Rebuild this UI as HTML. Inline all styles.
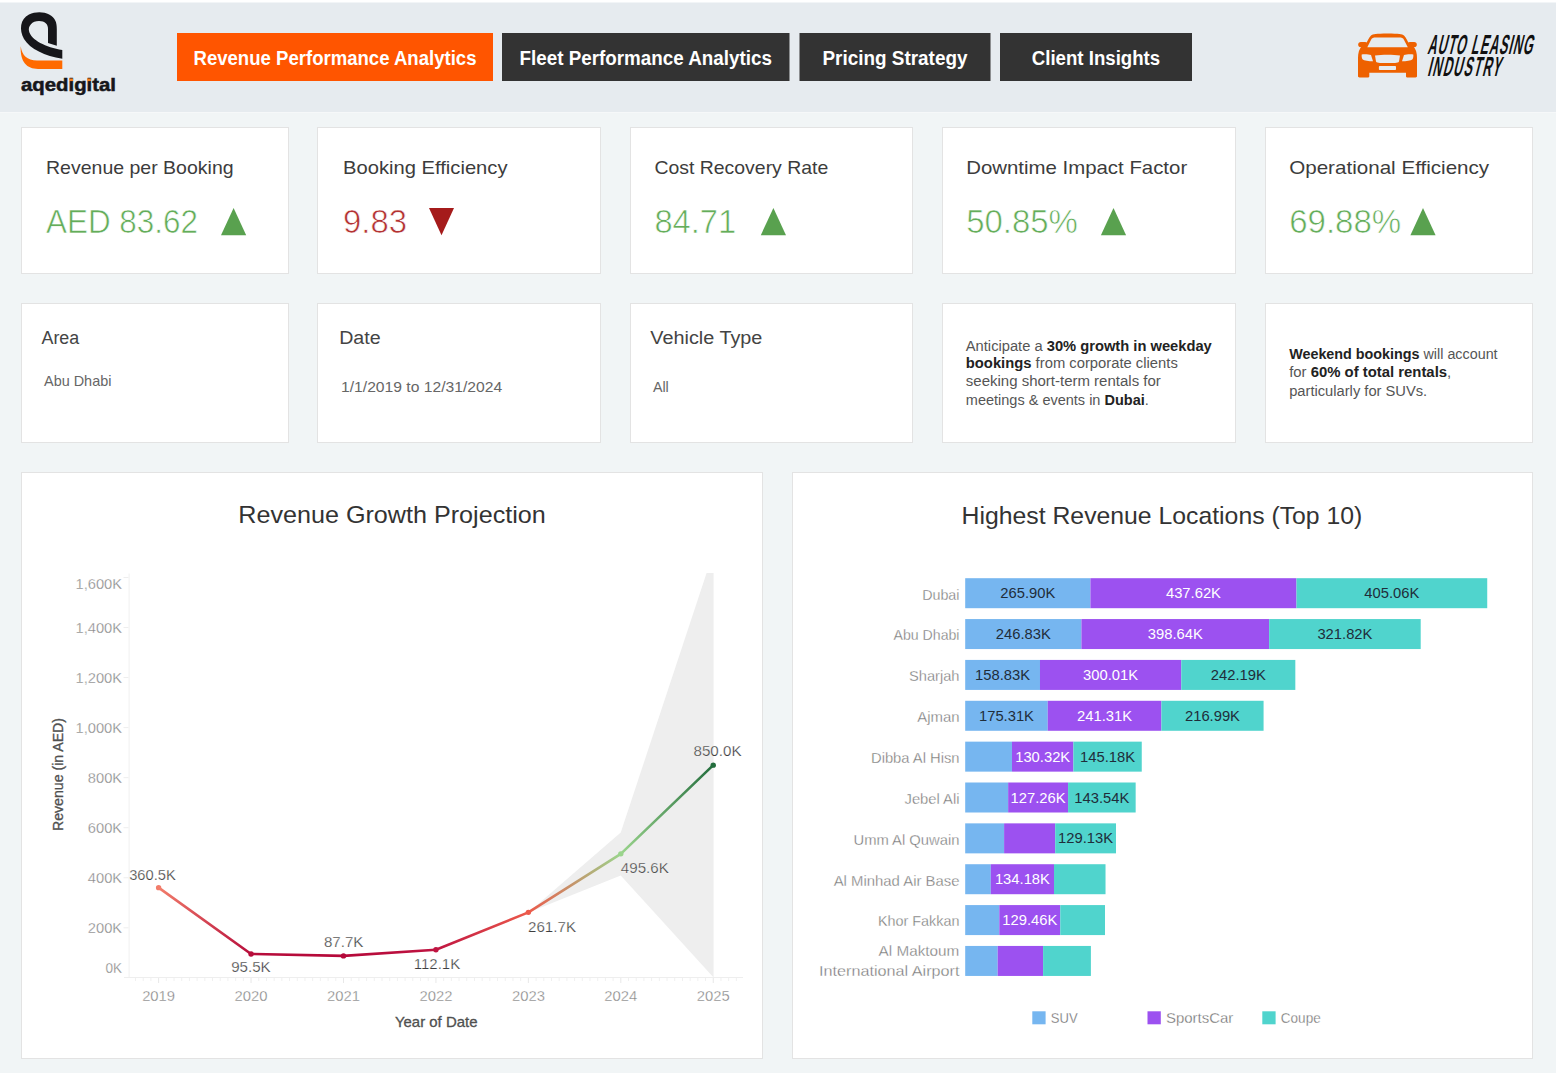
<!DOCTYPE html>
<html><head><meta charset="utf-8"><title>Revenue Performance Analytics</title>
<style>
html,body{margin:0;padding:0;background:#ffffff;overflow:hidden;}
svg{display:block;font-family:"Liberation Sans", sans-serif;}
</style></head><body>
<svg width="1556" height="1080" viewBox="0 0 1556 1080">

<rect x="0" y="0" width="1556" height="1080" fill="#ffffff"/>
<rect x="0" y="2.5" width="1556" height="109.5" fill="#e6ebef"/>
<rect x="0" y="112" width="1556" height="1" fill="#f6f8f9"/>
<rect x="0" y="113" width="1556" height="960" fill="#f1f5f6"/>
<path fill="#16161a" d="M62.3,58.7 C45,56 30,49 24,39 C19,30 20,19 29,14.5 C38,10 52,12 55.5,21 C56.5,23 56.8,26 56.8,29 L56.8,45.7 L48,43 L48,29 C48,24 45,21 39,21 C32,21 28,26 29,31 C31,40 46,47.5 62.3,49.9 Z"/>
<path fill="#ff6a00" d="M20.7,46.2 C22,55 27,60.5 37,60.5 L62.3,60.5 L62.3,68.9 L38,68.9 C27,68.9 20,62 20.7,46.2 Z"/>
<text x="21" y="91.2" font-size="18" font-weight="bold" fill="#16161a" stroke="#16161a" stroke-width="0.5" textLength="95" lengthAdjust="spacingAndGlyphs">aqedigital</text>
<rect x="69.4" y="78.5" width="3.6" height="2.6" fill="#f7801f"/><rect x="87.3" y="78.5" width="3.6" height="2.6" fill="#f7801f"/>
<rect x="177" y="33" width="316" height="48" fill="#ff5500"/>
<text x="335.0" y="65" font-size="19.6" font-weight="bold" fill="#ffffff" text-anchor="middle" textLength="283" lengthAdjust="spacingAndGlyphs">Revenue Performance Analytics</text>
<rect x="502" y="33" width="287.5" height="48" fill="#333333"/>
<text x="645.75" y="65" font-size="19.6" font-weight="bold" fill="#ffffff" text-anchor="middle" textLength="252.3" lengthAdjust="spacingAndGlyphs">Fleet Performance Analytics</text>
<rect x="799.5" y="33" width="191" height="48" fill="#333333"/>
<text x="895.0" y="65" font-size="19.6" font-weight="bold" fill="#ffffff" text-anchor="middle" textLength="145" lengthAdjust="spacingAndGlyphs">Pricing Strategy</text>
<rect x="1000" y="33" width="192" height="48" fill="#333333"/>
<text x="1096.0" y="65" font-size="19.6" font-weight="bold" fill="#ffffff" text-anchor="middle" textLength="128.4" lengthAdjust="spacingAndGlyphs">Client Insights</text>
<g fill="#ee6100">
<path d="M1364.5,47.5 C1366.5,43 1368.5,38 1371,35.5 C1373,34 1376,33.6 1387.5,33.5 C1399,33.6 1402,34 1404,35.5 C1406.5,38 1408.5,43 1410.5,47.5 Z"/>
<rect x="1358.2" y="42" width="9.5" height="5.2" rx="2.6"/>
<rect x="1407.3" y="42" width="9.5" height="5.2" rx="2.6"/>
<path d="M1362,46 L1413,46 C1416,49 1417,53 1417,58 L1417,76 C1417,77 1416.5,77.4 1415.5,77.4 L1407,77.4 C1406.3,77.4 1406,77 1406,76 L1406,72.8 L1369.3,72.8 L1369.3,76 C1369.3,77 1369,77.4 1368.3,77.4 L1359.5,77.4 C1358.5,77.4 1358,77 1358,76 L1358,58 C1358,53 1359,49 1362,46 Z"/>
</g>
<g fill="#e6ebef">
<path d="M1367.3,47.2 L1371.2,39.6 C1372,38.1 1373.2,37.6 1376,37.6 L1399,37.6 C1401.8,37.6 1403,38.1 1403.8,39.6 L1407.8,47.2 Z"/>
<path d="M1361.7,54.6 C1363.5,54 1369,54.3 1371,55 L1373,61.2 C1369,61.2 1364,60.8 1362.5,59.2 C1361.7,58.3 1361.5,56 1361.7,54.6 Z"/>
<path d="M1413.3,54.6 C1411.5,54 1406,54.3 1404,55 L1402,61.2 C1406,61.2 1411,60.8 1412.5,59.2 C1413.3,58.3 1413.5,56 1413.3,54.6 Z"/>
<path d="M1375,55.5 C1382,54.6 1393,54.6 1400,55.5 L1399,61.5 C1398.5,62.5 1397,62.9 1395,62.9 L1380,62.9 C1378,62.9 1376.5,62.5 1376,61.5 Z"/>
<rect x="1378.9" y="66.1" width="17.1" height="3.9" rx="0.8"/>
</g>
<g transform="translate(1427,53.5) skewX(-14) scale(0.45,1)"><text x="0" y="0" font-size="27.5" font-weight="bold" fill="#111111" textLength="233" lengthAdjust="spacing">AUTO LEASING</text></g>
<g transform="translate(1427,76.4) skewX(-14) scale(0.45,1)"><text x="0" y="0" font-size="27.5" font-weight="bold" fill="#111111" textLength="161.8" lengthAdjust="spacing">INDUSTRY</text></g>
<rect x="21.5" y="127.5" width="267" height="146" fill="#ffffff" stroke="#e3e3e3" stroke-width="1"/>
<rect x="21.5" y="303.5" width="267" height="139" fill="#ffffff" stroke="#e3e3e3" stroke-width="1"/>
<rect x="317.5" y="127.5" width="283" height="146" fill="#ffffff" stroke="#e3e3e3" stroke-width="1"/>
<rect x="317.5" y="303.5" width="283" height="139" fill="#ffffff" stroke="#e3e3e3" stroke-width="1"/>
<rect x="630.5" y="127.5" width="282" height="146" fill="#ffffff" stroke="#e3e3e3" stroke-width="1"/>
<rect x="630.5" y="303.5" width="282" height="139" fill="#ffffff" stroke="#e3e3e3" stroke-width="1"/>
<rect x="942.5" y="127.5" width="293" height="146" fill="#ffffff" stroke="#e3e3e3" stroke-width="1"/>
<rect x="942.5" y="303.5" width="293" height="139" fill="#ffffff" stroke="#e3e3e3" stroke-width="1"/>
<rect x="1265.5" y="127.5" width="267" height="146" fill="#ffffff" stroke="#e3e3e3" stroke-width="1"/>
<rect x="1265.5" y="303.5" width="267" height="139" fill="#ffffff" stroke="#e3e3e3" stroke-width="1"/>
<rect x="21.5" y="472.5" width="741" height="586" fill="#ffffff" stroke="#e3e3e3" stroke-width="1"/>
<rect x="792.5" y="472.5" width="740" height="586" fill="#ffffff" stroke="#e3e3e3" stroke-width="1"/>
<text x="46" y="174.2" font-size="19" fill="#3c3c3c" textLength="187.6" lengthAdjust="spacingAndGlyphs">Revenue per Booking</text>
<text x="46" y="233.2" font-size="33" fill="#64ad5a" stroke="#ffffff" stroke-width="0.65" textLength="152" lengthAdjust="spacingAndGlyphs">AED 83.62</text>
<path d="M221,235.2 L233.6,207.9 L246.2,235.2 Z" fill="#59a14f"/>
<text x="343" y="174.2" font-size="19" fill="#3c3c3c" textLength="164.5" lengthAdjust="spacingAndGlyphs">Booking Efficiency</text>
<text x="343" y="233.2" font-size="33" fill="#b33232" stroke="#ffffff" stroke-width="0.65" textLength="64" lengthAdjust="spacingAndGlyphs">9.83</text>
<path d="M429,207.9 L454,207.9 L441.5,235.2 Z" fill="#a51b1b"/>
<text x="654.4" y="174.2" font-size="19" fill="#3c3c3c" textLength="173.9" lengthAdjust="spacingAndGlyphs">Cost Recovery Rate</text>
<text x="654.4" y="233.2" font-size="33" fill="#64ad5a" stroke="#ffffff" stroke-width="0.65" textLength="81.8" lengthAdjust="spacingAndGlyphs">84.71</text>
<path d="M760.8,235.2 L773.4,207.9 L786.0,235.2 Z" fill="#59a14f"/>
<text x="966.2" y="174.2" font-size="19" fill="#3c3c3c" textLength="221" lengthAdjust="spacingAndGlyphs">Downtime Impact Factor</text>
<text x="966.2" y="233.2" font-size="33" fill="#64ad5a" stroke="#ffffff" stroke-width="0.65" textLength="111.7" lengthAdjust="spacingAndGlyphs">50.85%</text>
<path d="M1100.9,235.2 L1113.5,207.9 L1126.1000000000001,235.2 Z" fill="#59a14f"/>
<text x="1289.2" y="174.2" font-size="19" fill="#3c3c3c" textLength="200" lengthAdjust="spacingAndGlyphs">Operational Efficiency</text>
<text x="1289.2" y="233.2" font-size="33" fill="#64ad5a" stroke="#ffffff" stroke-width="0.65" textLength="112" lengthAdjust="spacingAndGlyphs">69.88%</text>
<path d="M1410.4,235.2 L1423.0,207.9 L1435.6000000000001,235.2 Z" fill="#59a14f"/>
<text x="41.5" y="343.5" font-size="18" fill="#444444" textLength="37.7" lengthAdjust="spacingAndGlyphs">Area</text>
<text x="44" y="385.9" font-size="14.5" fill="#666666" textLength="67.4" lengthAdjust="spacingAndGlyphs">Abu Dhabi</text>
<text x="339.2" y="343.5" font-size="18" fill="#444444" textLength="41.5" lengthAdjust="spacingAndGlyphs">Date</text>
<text x="341" y="392.3" font-size="14.5" fill="#666666" textLength="161.2" lengthAdjust="spacingAndGlyphs">1/1/2019 to 12/31/2024</text>
<text x="650.3" y="343.5" font-size="18" fill="#444444" textLength="112.1" lengthAdjust="spacingAndGlyphs">Vehicle Type</text>
<text x="652.9" y="392" font-size="14.5" fill="#666666" textLength="15.9" lengthAdjust="spacingAndGlyphs">All</text>
<text x="965.8" y="351.2" font-size="14" textLength="246" lengthAdjust="spacingAndGlyphs"><tspan fill="#555555">Anticipate a </tspan><tspan font-weight="bold" fill="#222222">30% growth in weekday</tspan></text>
<text x="965.8" y="368.2" font-size="14" textLength="212" lengthAdjust="spacingAndGlyphs"><tspan font-weight="bold" fill="#222222">bookings</tspan><tspan fill="#555555"> from corporate clients</tspan></text>
<text x="965.8" y="386.4" font-size="14" textLength="195" lengthAdjust="spacingAndGlyphs"><tspan fill="#555555">seeking short-term rentals for</tspan></text>
<text x="965.8" y="404.6" font-size="14" textLength="183" lengthAdjust="spacingAndGlyphs"><tspan fill="#555555">meetings &amp; events in </tspan><tspan font-weight="bold" fill="#222222">Dubai</tspan><tspan fill="#555555">.</tspan></text>
<text x="1289.2" y="359.4" font-size="14" textLength="208.4" lengthAdjust="spacingAndGlyphs"><tspan font-weight="bold" fill="#222222">Weekend bookings</tspan><tspan fill="#555555"> will account</tspan></text>
<text x="1289.2" y="377.1" font-size="14" textLength="162" lengthAdjust="spacingAndGlyphs"><tspan fill="#555555">for </tspan><tspan font-weight="bold" fill="#222222">60% of total rentals</tspan><tspan fill="#555555">,</tspan></text>
<text x="1289.2" y="395.6" font-size="14" textLength="138" lengthAdjust="spacingAndGlyphs"><tspan fill="#555555">particularly for SUVs.</tspan></text>
<text x="238.3" y="523.4" font-size="24.5" fill="#333333" textLength="307.5" lengthAdjust="spacingAndGlyphs">Revenue Growth Projection</text>
<rect x="128.6" y="573.5" width="1" height="404.5" fill="#f0f0f0"/>
<rect x="124" y="977" width="619" height="1" fill="#eeeeee"/>
<text x="122.1" y="973.3" font-size="14.3" fill="#828282" stroke="#ffffff" stroke-width="0.3" text-anchor="end" textLength="16.6" lengthAdjust="spacingAndGlyphs">0K</text>
<rect x="123.5" y="927.30" width="5" height="1" fill="#eeeeee"/>
<text x="122.1" y="932.8" font-size="14.3" fill="#828282" stroke="#ffffff" stroke-width="0.3" text-anchor="end" textLength="34.3" lengthAdjust="spacingAndGlyphs">200K</text>
<rect x="123.5" y="877.25" width="5" height="1" fill="#eeeeee"/>
<text x="122.1" y="882.8" font-size="14.3" fill="#828282" stroke="#ffffff" stroke-width="0.3" text-anchor="end" textLength="34.3" lengthAdjust="spacingAndGlyphs">400K</text>
<rect x="123.5" y="827.20" width="5" height="1" fill="#eeeeee"/>
<text x="122.1" y="832.7" font-size="14.3" fill="#828282" stroke="#ffffff" stroke-width="0.3" text-anchor="end" textLength="34.3" lengthAdjust="spacingAndGlyphs">600K</text>
<rect x="123.5" y="777.15" width="5" height="1" fill="#eeeeee"/>
<text x="122.1" y="782.7" font-size="14.3" fill="#828282" stroke="#ffffff" stroke-width="0.3" text-anchor="end" textLength="34.3" lengthAdjust="spacingAndGlyphs">800K</text>
<rect x="123.5" y="727.10" width="5" height="1" fill="#eeeeee"/>
<text x="122.1" y="732.6" font-size="14.3" fill="#828282" stroke="#ffffff" stroke-width="0.3" text-anchor="end" textLength="46.6" lengthAdjust="spacingAndGlyphs">1,000K</text>
<rect x="123.5" y="677.05" width="5" height="1" fill="#eeeeee"/>
<text x="122.1" y="682.6" font-size="14.3" fill="#828282" stroke="#ffffff" stroke-width="0.3" text-anchor="end" textLength="46.6" lengthAdjust="spacingAndGlyphs">1,200K</text>
<rect x="123.5" y="627.00" width="5" height="1" fill="#eeeeee"/>
<text x="122.1" y="632.5" font-size="14.3" fill="#828282" stroke="#ffffff" stroke-width="0.3" text-anchor="end" textLength="46.6" lengthAdjust="spacingAndGlyphs">1,400K</text>
<rect x="123.5" y="576.95" width="5" height="1" fill="#eeeeee"/>
<text x="122.1" y="589.4" font-size="14.3" fill="#828282" stroke="#ffffff" stroke-width="0.3" text-anchor="end" textLength="46.6" lengthAdjust="spacingAndGlyphs">1,600K</text>
<rect x="134.99" y="978" width="1" height="3" fill="#f0f0f0"/>
<rect x="142.69" y="978" width="1" height="3" fill="#f0f0f0"/>
<rect x="150.40" y="978" width="1" height="3" fill="#f0f0f0"/>
<rect x="158.10" y="978" width="1" height="5" fill="#e8e8e8"/>
<rect x="165.80" y="978" width="1" height="3" fill="#f0f0f0"/>
<rect x="173.51" y="978" width="1" height="3" fill="#f0f0f0"/>
<rect x="181.21" y="978" width="1" height="3" fill="#f0f0f0"/>
<rect x="188.91" y="978" width="1" height="3" fill="#f0f0f0"/>
<rect x="196.62" y="978" width="1" height="3" fill="#f0f0f0"/>
<rect x="204.32" y="978" width="1" height="3" fill="#f0f0f0"/>
<rect x="212.02" y="978" width="1" height="3" fill="#f0f0f0"/>
<rect x="219.73" y="978" width="1" height="3" fill="#f0f0f0"/>
<rect x="227.43" y="978" width="1" height="3" fill="#f0f0f0"/>
<rect x="235.13" y="978" width="1" height="3" fill="#f0f0f0"/>
<rect x="242.84" y="978" width="1" height="3" fill="#f0f0f0"/>
<rect x="250.54" y="978" width="1" height="5" fill="#e8e8e8"/>
<rect x="258.25" y="978" width="1" height="3" fill="#f0f0f0"/>
<rect x="265.95" y="978" width="1" height="3" fill="#f0f0f0"/>
<rect x="273.65" y="978" width="1" height="3" fill="#f0f0f0"/>
<rect x="281.36" y="978" width="1" height="3" fill="#f0f0f0"/>
<rect x="289.06" y="978" width="1" height="3" fill="#f0f0f0"/>
<rect x="296.76" y="978" width="1" height="3" fill="#f0f0f0"/>
<rect x="304.47" y="978" width="1" height="3" fill="#f0f0f0"/>
<rect x="312.17" y="978" width="1" height="3" fill="#f0f0f0"/>
<rect x="319.87" y="978" width="1" height="3" fill="#f0f0f0"/>
<rect x="327.58" y="978" width="1" height="3" fill="#f0f0f0"/>
<rect x="335.28" y="978" width="1" height="3" fill="#f0f0f0"/>
<rect x="342.98" y="978" width="1" height="5" fill="#e8e8e8"/>
<rect x="350.69" y="978" width="1" height="3" fill="#f0f0f0"/>
<rect x="358.39" y="978" width="1" height="3" fill="#f0f0f0"/>
<rect x="366.09" y="978" width="1" height="3" fill="#f0f0f0"/>
<rect x="373.80" y="978" width="1" height="3" fill="#f0f0f0"/>
<rect x="381.50" y="978" width="1" height="3" fill="#f0f0f0"/>
<rect x="389.20" y="978" width="1" height="3" fill="#f0f0f0"/>
<rect x="396.91" y="978" width="1" height="3" fill="#f0f0f0"/>
<rect x="404.61" y="978" width="1" height="3" fill="#f0f0f0"/>
<rect x="412.31" y="978" width="1" height="3" fill="#f0f0f0"/>
<rect x="420.02" y="978" width="1" height="3" fill="#f0f0f0"/>
<rect x="427.72" y="978" width="1" height="3" fill="#f0f0f0"/>
<rect x="435.42" y="978" width="1" height="5" fill="#e8e8e8"/>
<rect x="443.13" y="978" width="1" height="3" fill="#f0f0f0"/>
<rect x="450.83" y="978" width="1" height="3" fill="#f0f0f0"/>
<rect x="458.54" y="978" width="1" height="3" fill="#f0f0f0"/>
<rect x="466.24" y="978" width="1" height="3" fill="#f0f0f0"/>
<rect x="473.94" y="978" width="1" height="3" fill="#f0f0f0"/>
<rect x="481.65" y="978" width="1" height="3" fill="#f0f0f0"/>
<rect x="489.35" y="978" width="1" height="3" fill="#f0f0f0"/>
<rect x="497.05" y="978" width="1" height="3" fill="#f0f0f0"/>
<rect x="504.76" y="978" width="1" height="3" fill="#f0f0f0"/>
<rect x="512.46" y="978" width="1" height="3" fill="#f0f0f0"/>
<rect x="520.16" y="978" width="1" height="3" fill="#f0f0f0"/>
<rect x="527.87" y="978" width="1" height="5" fill="#e8e8e8"/>
<rect x="535.57" y="978" width="1" height="3" fill="#f0f0f0"/>
<rect x="543.27" y="978" width="1" height="3" fill="#f0f0f0"/>
<rect x="550.98" y="978" width="1" height="3" fill="#f0f0f0"/>
<rect x="558.68" y="978" width="1" height="3" fill="#f0f0f0"/>
<rect x="566.38" y="978" width="1" height="3" fill="#f0f0f0"/>
<rect x="574.09" y="978" width="1" height="3" fill="#f0f0f0"/>
<rect x="581.79" y="978" width="1" height="3" fill="#f0f0f0"/>
<rect x="589.49" y="978" width="1" height="3" fill="#f0f0f0"/>
<rect x="597.20" y="978" width="1" height="3" fill="#f0f0f0"/>
<rect x="604.90" y="978" width="1" height="3" fill="#f0f0f0"/>
<rect x="612.60" y="978" width="1" height="3" fill="#f0f0f0"/>
<rect x="620.31" y="978" width="1" height="5" fill="#e8e8e8"/>
<rect x="628.01" y="978" width="1" height="3" fill="#f0f0f0"/>
<rect x="635.72" y="978" width="1" height="3" fill="#f0f0f0"/>
<rect x="643.42" y="978" width="1" height="3" fill="#f0f0f0"/>
<rect x="651.12" y="978" width="1" height="3" fill="#f0f0f0"/>
<rect x="658.83" y="978" width="1" height="3" fill="#f0f0f0"/>
<rect x="666.53" y="978" width="1" height="3" fill="#f0f0f0"/>
<rect x="674.23" y="978" width="1" height="3" fill="#f0f0f0"/>
<rect x="681.94" y="978" width="1" height="3" fill="#f0f0f0"/>
<rect x="689.64" y="978" width="1" height="3" fill="#f0f0f0"/>
<rect x="697.34" y="978" width="1" height="3" fill="#f0f0f0"/>
<rect x="705.05" y="978" width="1" height="3" fill="#f0f0f0"/>
<rect x="712.75" y="978" width="1" height="5" fill="#e8e8e8"/>
<rect x="720.45" y="978" width="1" height="3" fill="#f0f0f0"/>
<rect x="728.16" y="978" width="1" height="3" fill="#f0f0f0"/>
<rect x="735.86" y="978" width="1" height="3" fill="#f0f0f0"/>
<text x="158.6" y="1001.3" font-size="14.8" fill="#828282" stroke="#ffffff" stroke-width="0.3" text-anchor="middle">2019</text>
<text x="251.0" y="1001.3" font-size="14.8" fill="#828282" stroke="#ffffff" stroke-width="0.3" text-anchor="middle">2020</text>
<text x="343.5" y="1001.3" font-size="14.8" fill="#828282" stroke="#ffffff" stroke-width="0.3" text-anchor="middle">2021</text>
<text x="435.9" y="1001.3" font-size="14.8" fill="#828282" stroke="#ffffff" stroke-width="0.3" text-anchor="middle">2022</text>
<text x="528.4" y="1001.3" font-size="14.8" fill="#828282" stroke="#ffffff" stroke-width="0.3" text-anchor="middle">2023</text>
<text x="620.8" y="1001.3" font-size="14.8" fill="#828282" stroke="#ffffff" stroke-width="0.3" text-anchor="middle">2024</text>
<text x="713.2" y="1001.3" font-size="14.8" fill="#828282" stroke="#ffffff" stroke-width="0.3" text-anchor="middle">2025</text>
<text x="436.2" y="1027" font-size="14.3" fill="#505050" stroke="#505050" stroke-width="0.3" text-anchor="middle" textLength="82.6" lengthAdjust="spacingAndGlyphs">Year of Date</text>
<g transform="translate(63.2,774.5) rotate(-90)"><text x="0" y="0" font-size="14" fill="#505050" stroke="#505050" stroke-width="0.3" text-anchor="middle" textLength="113" lengthAdjust="spacingAndGlyphs">Revenue (in AED)</text></g>
<path d="M528.4,912.4 L620.75,832.5 L706.6,573 L713.6,573 L713.6,977.4 L620.75,875.5 Z" fill="#eeeeee"/>
<defs>
<linearGradient id="g0" gradientUnits="userSpaceOnUse" x1="158.6" y1="887.6" x2="251.0" y2="954.0"><stop offset="0" stop-color="#f27d6b"/><stop offset="1" stop-color="#b70d3b"/></linearGradient>
<linearGradient id="g1" gradientUnits="userSpaceOnUse" x1="251.0" y1="954.0" x2="343.5" y2="955.9"><stop offset="0" stop-color="#b70d3b"/><stop offset="1" stop-color="#b5093a"/></linearGradient>
<linearGradient id="g2" gradientUnits="userSpaceOnUse" x1="343.5" y1="955.9" x2="435.9" y2="949.8"><stop offset="0" stop-color="#b5093a"/><stop offset="1" stop-color="#bf1441"/></linearGradient>
<linearGradient id="g3" gradientUnits="userSpaceOnUse" x1="435.9" y1="949.8" x2="528.4" y2="912.4"><stop offset="0" stop-color="#bf1441"/><stop offset="1" stop-color="#ec5a4b"/></linearGradient>
<linearGradient id="g4" gradientUnits="userSpaceOnUse" x1="528.4" y1="912.4" x2="620.8" y2="853.8"><stop offset="0" stop-color="#ec5a4b"/><stop offset="1" stop-color="#9ad48c"/></linearGradient>
<linearGradient id="g5" gradientUnits="userSpaceOnUse" x1="620.8" y1="853.8" x2="713.2" y2="765.1"><stop offset="0" stop-color="#9ad48c"/><stop offset="1" stop-color="#246e3e"/></linearGradient>
</defs>
<line x1="158.60" y1="887.63" x2="251.04" y2="953.95" stroke="url(#g0)" stroke-width="2.6" stroke-linecap="round"/>
<line x1="251.04" y1="953.95" x2="343.48" y2="955.90" stroke="url(#g1)" stroke-width="2.6" stroke-linecap="round"/>
<line x1="343.48" y1="955.90" x2="435.92" y2="949.80" stroke="url(#g2)" stroke-width="2.6" stroke-linecap="round"/>
<line x1="435.92" y1="949.80" x2="528.37" y2="912.36" stroke="url(#g3)" stroke-width="2.6" stroke-linecap="round"/>
<line x1="528.37" y1="912.36" x2="620.81" y2="853.83" stroke="url(#g4)" stroke-width="2.6" stroke-linecap="round"/>
<line x1="620.81" y1="853.83" x2="713.25" y2="765.14" stroke="url(#g5)" stroke-width="2.6" stroke-linecap="round"/>
<circle cx="158.60" cy="887.63" r="2.7" fill="#f27d6b"/>
<circle cx="251.04" cy="953.95" r="2.7" fill="#b70d3b"/>
<circle cx="343.48" cy="955.90" r="2.7" fill="#b5093a"/>
<circle cx="435.92" cy="949.80" r="2.7" fill="#bf1441"/>
<circle cx="528.37" cy="912.36" r="2.7" fill="#ec5a4b"/>
<circle cx="620.81" cy="853.83" r="2.7" fill="#9ad48c"/>
<circle cx="713.25" cy="765.14" r="2.7" fill="#246e3e"/>
<text x="129.2" y="879.7" font-size="14" fill="#3e3e3e" stroke="#ffffff" stroke-width="0.25" text-anchor="start" textLength="46.6" lengthAdjust="spacingAndGlyphs">360.5K</text>
<text x="250.9" y="971.8" font-size="14" fill="#3e3e3e" stroke="#ffffff" stroke-width="0.25" text-anchor="middle" textLength="39.5" lengthAdjust="spacingAndGlyphs">95.5K</text>
<text x="343.7" y="947.2" font-size="14" fill="#3e3e3e" stroke="#ffffff" stroke-width="0.25" text-anchor="middle" textLength="39.5" lengthAdjust="spacingAndGlyphs">87.7K</text>
<text x="437" y="969.3" font-size="14" fill="#3e3e3e" stroke="#ffffff" stroke-width="0.25" text-anchor="middle" textLength="46.5" lengthAdjust="spacingAndGlyphs">112.1K</text>
<text x="528" y="932.3" font-size="14" fill="#3e3e3e" stroke="#ffffff" stroke-width="0.25" text-anchor="start" textLength="48" lengthAdjust="spacingAndGlyphs">261.7K</text>
<text x="620.8" y="872.5" font-size="14" fill="#3e3e3e" stroke="#ffffff" stroke-width="0.25" text-anchor="start" textLength="48" lengthAdjust="spacingAndGlyphs">495.6K</text>
<text x="717.5" y="756.3" font-size="14" fill="#3e3e3e" stroke="#ffffff" stroke-width="0.25" text-anchor="middle" textLength="48" lengthAdjust="spacingAndGlyphs">850.0K</text>
<text x="961.6" y="523.7" font-size="24.8" fill="#333333" textLength="400.7" lengthAdjust="spacingAndGlyphs">Highest Revenue Locations (Top 10)</text>
<rect x="965.20" y="578.20" width="125.21" height="30" fill="#76b6f0"/>
<text x="1027.81" y="598.20" font-size="14.3" fill="#1f2d3a" text-anchor="middle" textLength="55" lengthAdjust="spacingAndGlyphs">265.90K</text>
<rect x="1090.41" y="578.20" width="206.08" height="30" fill="#9c51f0"/>
<text x="1193.45" y="598.20" font-size="14.3" fill="#ffffff" text-anchor="middle" textLength="55" lengthAdjust="spacingAndGlyphs">437.62K</text>
<rect x="1296.49" y="578.20" width="190.74" height="30" fill="#50d4cd"/>
<text x="1391.86" y="598.20" font-size="14.3" fill="#1f2d3a" text-anchor="middle" textLength="55" lengthAdjust="spacingAndGlyphs">405.06K</text>
<text x="922.2" y="599.50" font-size="14.5" fill="#767676" stroke="#ffffff" stroke-width="0.3" textLength="37.3" lengthAdjust="spacingAndGlyphs">Dubai</text>
<rect x="965.20" y="619.06" width="116.23" height="30" fill="#76b6f0"/>
<text x="1023.32" y="639.06" font-size="14.3" fill="#1f2d3a" text-anchor="middle" textLength="55" lengthAdjust="spacingAndGlyphs">246.83K</text>
<rect x="1081.43" y="619.06" width="187.72" height="30" fill="#9c51f0"/>
<text x="1175.29" y="639.06" font-size="14.3" fill="#ffffff" text-anchor="middle" textLength="55" lengthAdjust="spacingAndGlyphs">398.64K</text>
<rect x="1269.15" y="619.06" width="151.55" height="30" fill="#50d4cd"/>
<text x="1344.92" y="639.06" font-size="14.3" fill="#1f2d3a" text-anchor="middle" textLength="55" lengthAdjust="spacingAndGlyphs">321.82K</text>
<text x="893.5" y="640.36" font-size="14.5" fill="#767676" stroke="#ffffff" stroke-width="0.3" textLength="66" lengthAdjust="spacingAndGlyphs">Abu Dhabi</text>
<rect x="965.20" y="659.92" width="74.79" height="30" fill="#76b6f0"/>
<text x="1002.60" y="679.92" font-size="14.3" fill="#1f2d3a" text-anchor="middle" textLength="55" lengthAdjust="spacingAndGlyphs">158.83K</text>
<rect x="1039.99" y="659.92" width="141.27" height="30" fill="#9c51f0"/>
<text x="1110.63" y="679.92" font-size="14.3" fill="#ffffff" text-anchor="middle" textLength="55" lengthAdjust="spacingAndGlyphs">300.01K</text>
<rect x="1181.27" y="659.92" width="114.05" height="30" fill="#50d4cd"/>
<text x="1238.29" y="679.92" font-size="14.3" fill="#1f2d3a" text-anchor="middle" textLength="55" lengthAdjust="spacingAndGlyphs">242.19K</text>
<text x="909.0" y="681.22" font-size="14.5" fill="#767676" stroke="#ffffff" stroke-width="0.3" textLength="50.5" lengthAdjust="spacingAndGlyphs">Sharjah</text>
<rect x="965.20" y="700.78" width="82.55" height="30" fill="#76b6f0"/>
<text x="1006.48" y="720.78" font-size="14.3" fill="#1f2d3a" text-anchor="middle" textLength="55" lengthAdjust="spacingAndGlyphs">175.31K</text>
<rect x="1047.75" y="700.78" width="113.63" height="30" fill="#9c51f0"/>
<text x="1104.57" y="720.78" font-size="14.3" fill="#ffffff" text-anchor="middle" textLength="55" lengthAdjust="spacingAndGlyphs">241.31K</text>
<rect x="1161.39" y="700.78" width="102.18" height="30" fill="#50d4cd"/>
<text x="1212.48" y="720.78" font-size="14.3" fill="#1f2d3a" text-anchor="middle" textLength="55" lengthAdjust="spacingAndGlyphs">216.99K</text>
<text x="917.2" y="722.08" font-size="14.5" fill="#767676" stroke="#ffffff" stroke-width="0.3" textLength="42.3" lengthAdjust="spacingAndGlyphs">Ajman</text>
<rect x="965.20" y="741.64" width="46.81" height="30" fill="#76b6f0"/>
<rect x="1012.01" y="741.64" width="61.37" height="30" fill="#9c51f0"/>
<text x="1042.69" y="761.64" font-size="14.3" fill="#ffffff" text-anchor="middle" textLength="55" lengthAdjust="spacingAndGlyphs">130.32K</text>
<rect x="1073.38" y="741.64" width="68.37" height="30" fill="#50d4cd"/>
<text x="1107.56" y="761.64" font-size="14.3" fill="#1f2d3a" text-anchor="middle" textLength="55" lengthAdjust="spacingAndGlyphs">145.18K</text>
<text x="871.0" y="762.94" font-size="14.5" fill="#767676" stroke="#ffffff" stroke-width="0.3" textLength="88.5" lengthAdjust="spacingAndGlyphs">Dibba Al Hisn</text>
<rect x="965.20" y="782.50" width="42.95" height="30" fill="#76b6f0"/>
<rect x="1008.15" y="782.50" width="59.93" height="30" fill="#9c51f0"/>
<text x="1038.11" y="802.50" font-size="14.3" fill="#ffffff" text-anchor="middle" textLength="55" lengthAdjust="spacingAndGlyphs">127.26K</text>
<rect x="1068.07" y="782.50" width="67.59" height="30" fill="#50d4cd"/>
<text x="1101.87" y="802.50" font-size="14.3" fill="#1f2d3a" text-anchor="middle" textLength="55" lengthAdjust="spacingAndGlyphs">143.54K</text>
<text x="904.5" y="803.80" font-size="14.5" fill="#767676" stroke="#ffffff" stroke-width="0.3" textLength="55" lengthAdjust="spacingAndGlyphs">Jebel Ali</text>
<rect x="965.20" y="823.36" width="38.90" height="30" fill="#76b6f0"/>
<rect x="1004.10" y="823.36" width="51.09" height="30" fill="#9c51f0"/>
<rect x="1055.19" y="823.36" width="60.81" height="30" fill="#50d4cd"/>
<text x="1085.59" y="843.36" font-size="14.3" fill="#1f2d3a" text-anchor="middle" textLength="55" lengthAdjust="spacingAndGlyphs">129.13K</text>
<text x="853.5" y="844.66" font-size="14.5" fill="#767676" stroke="#ffffff" stroke-width="0.3" textLength="106" lengthAdjust="spacingAndGlyphs">Umm Al Quwain</text>
<rect x="965.20" y="864.22" width="25.62" height="30" fill="#76b6f0"/>
<rect x="990.82" y="864.22" width="63.19" height="30" fill="#9c51f0"/>
<text x="1022.41" y="884.22" font-size="14.3" fill="#ffffff" text-anchor="middle" textLength="55" lengthAdjust="spacingAndGlyphs">134.18K</text>
<rect x="1054.00" y="864.22" width="51.52" height="30" fill="#50d4cd"/>
<text x="833.7" y="885.52" font-size="14.5" fill="#767676" stroke="#ffffff" stroke-width="0.3" textLength="125.8" lengthAdjust="spacingAndGlyphs">Al Minhad Air Base</text>
<rect x="965.20" y="905.08" width="34.09" height="30" fill="#76b6f0"/>
<rect x="999.29" y="905.08" width="60.96" height="30" fill="#9c51f0"/>
<text x="1029.77" y="925.08" font-size="14.3" fill="#ffffff" text-anchor="middle" textLength="55" lengthAdjust="spacingAndGlyphs">129.46K</text>
<rect x="1060.26" y="905.08" width="44.74" height="30" fill="#50d4cd"/>
<text x="877.9" y="926.38" font-size="14.5" fill="#767676" stroke="#ffffff" stroke-width="0.3" textLength="81.6" lengthAdjust="spacingAndGlyphs">Khor Fakkan</text>
<rect x="965.20" y="945.94" width="32.49" height="30" fill="#76b6f0"/>
<rect x="997.69" y="945.94" width="45.39" height="30" fill="#9c51f0"/>
<rect x="1043.09" y="945.94" width="47.80" height="30" fill="#50d4cd"/>
<text x="878.6" y="955.7" font-size="14.5" fill="#767676" stroke="#ffffff" stroke-width="0.3" textLength="80.7" lengthAdjust="spacingAndGlyphs">Al Maktoum</text>
<text x="819" y="975.6" font-size="14.5" fill="#767676" stroke="#ffffff" stroke-width="0.3" textLength="140.5" lengthAdjust="spacingAndGlyphs">International Airport</text>
<rect x="1032.3" y="1011.3" width="13.3" height="13" fill="#76b6f0"/>
<text x="1050.8" y="1023" font-size="14.5" fill="#6a6a6a" stroke="#ffffff" stroke-width="0.3" textLength="26.8" lengthAdjust="spacingAndGlyphs">SUV</text>
<rect x="1147.5" y="1011.3" width="13.3" height="13" fill="#9c51f0"/>
<text x="1166.0" y="1023" font-size="14.5" fill="#6a6a6a" stroke="#ffffff" stroke-width="0.3" textLength="67.3" lengthAdjust="spacingAndGlyphs">SportsCar</text>
<rect x="1262.3" y="1011.3" width="13.3" height="13" fill="#50d4cd"/>
<text x="1280.8" y="1023" font-size="14.5" fill="#6a6a6a" stroke="#ffffff" stroke-width="0.3" textLength="39.9" lengthAdjust="spacingAndGlyphs">Coupe</text>
</svg></body></html>
